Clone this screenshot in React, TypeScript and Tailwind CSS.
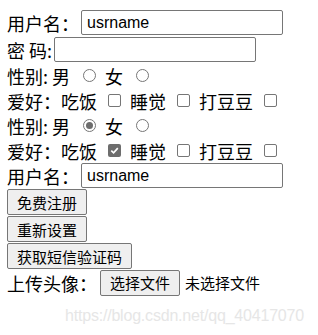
import React from 'react';

const font = '"Noto Sans CJK SC", "Liberation Sans", sans-serif';

function Radio({ checked = false }: { checked?: boolean }) {
  return (
    <span className="ml-[13px] mr-[9px] inline-flex size-[13px] items-center justify-center rounded-full border border-[#767676] bg-white">
      {checked && <span className="size-[7px] rounded-full bg-[#6d6d6d]" />}
    </span>
  );
}

function Check({ checked = false }: { checked?: boolean }) {
  return (
    <span
      className={
        checked
          ? 'ml-[11px] mr-[9px] inline-flex size-[13px] items-center justify-center rounded-[2px] bg-[#6d6d6d]'
          : 'ml-[11px] mr-[9px] inline-flex size-[13px] rounded-[2px] border border-[#767676] bg-white'
      }
    >
      {checked && (
        <svg viewBox="0 0 12 12" className="size-[11px]">
          <path d="M2.5 6.2 L5 8.6 L9.6 3.4" fill="none" stroke="white" strokeWidth="1.8" />
        </svg>
      )}
    </span>
  );
}

function Btn({ children }: { children: React.ReactNode }) {
  return (
    <button className="h-[26px] rounded-[2px] border border-[#767676] bg-[#efefef] px-[9px] text-[15px] leading-none text-black">
      {children}
    </button>
  );
}

function TextInput({ value, w }: { value?: string; w: string }) {
  return (
    <span
      className={`${w} inline-flex h-[25px] items-center rounded-[2px] border border-[#767676] bg-white px-[5px] text-[16px] text-black`}
      style={{ fontFamily: '"Liberation Sans", Arial, sans-serif' }}
    >
      {value}
    </span>
  );
}

function Gender({ first }: { first?: boolean }) {
  return (
    <div className="flex h-[25px] items-center">
      <span>性别: 男</span>
      <Radio checked={first} />
      <span>女</span>
      <Radio />
    </div>
  );
}

function Hobby({ first }: { first?: boolean }) {
  return (
    <div className="flex h-[25px] items-center">
      <span>爱好：吃饭</span>
      <Check checked={first} />
      <span>睡觉</span>
      <Check />
      <span>打豆豆</span>
      <Check />
    </div>
  );
}

export default function App() {
  return (
    <div
      className="relative h-[335px] w-[318px] overflow-hidden bg-white pl-[7px] pt-[9px] text-[18px] leading-none text-black"
      style={{ fontFamily: font }}
    >
      <div className="flex h-[27px] items-center">
        <span className="w-[74px]">用户名：</span>
        <TextInput value="usrname" w="w-[202px]" />
      </div>
      <div className="flex h-[27px] items-center">
        <span className="w-[47px]">密 码:</span>
        <TextInput w="w-[202px]" />
      </div>
      <Gender />
      <Hobby />
      <Gender first />
      <Hobby first />
      <div className="flex h-[25px] items-center">
        <span className="w-[74px]">用户名：</span>
        <TextInput value="usrname" w="w-[202px]" />
      </div>
      <div className="mt-[1px] flex flex-col items-start gap-[1px]">
        <Btn>免费注册</Btn>
        <Btn>重新设置</Btn>
        <Btn>获取短信验证码</Btn>
      </div>
      <div className="flex h-[27px] items-center">
        <span className="w-[93px]">上传头像：</span>
        <Btn>选择文件</Btn>
        <span className="ml-[5px] text-[15px]">未选择文件</span>
      </div>
      <div
        className="absolute left-[65px] top-[308px] text-[16px] tracking-[-0.2px] text-[#e6e6e6]"
        style={{ fontFamily: '"Liberation Sans", Arial, sans-serif' }}
      >
        https://blog.csdn.net/qq_40417070
      </div>
    </div>
  );
}
